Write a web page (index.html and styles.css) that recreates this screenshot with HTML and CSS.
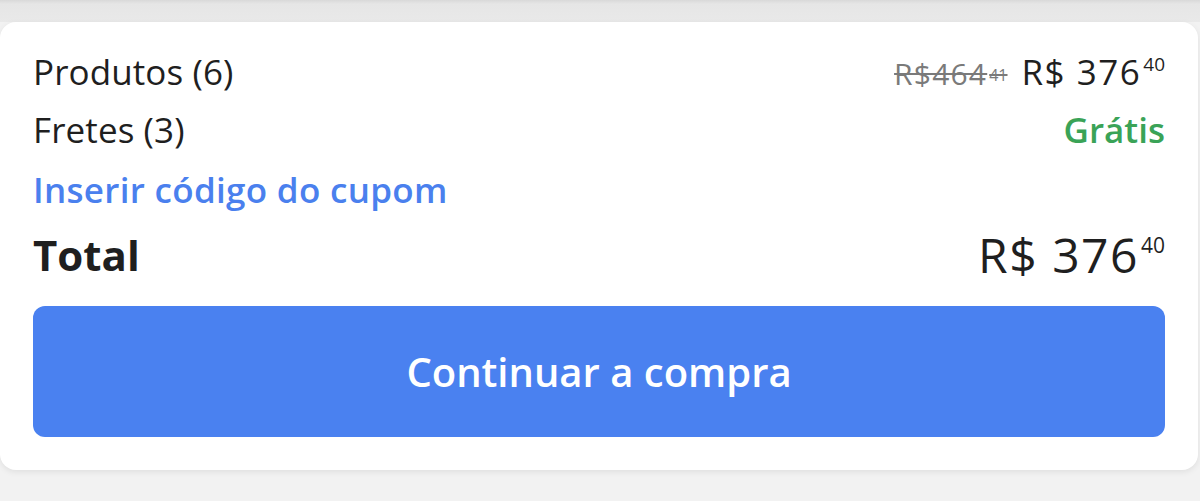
FILE: index.html
```html
<!DOCTYPE html>
<html lang="pt-BR">
<head>
<meta charset="utf-8">
<link rel="stylesheet" href="styles.css">
</head>
<body>
<div class="topbar"></div>
<div class="card">
  <div class="row row-products">
    <span class="label">Produtos (6)</span>
    <span class="prices">
      <span class="old"><span class="old-main">R$464</span><span class="old-cents">41</span></span>
      <span class="price">R$ 376<sup class="cents">40</sup></span>
    </span>
  </div>
  <div class="row row-shipping">
    <span class="label">Fretes (3)</span>
    <span class="free">Grátis</span>
  </div>
  <div class="row row-coupon">
    <a class="coupon">Inserir código do cupom</a>
  </div>
  <div class="row row-total">
    <span class="total-label">Total</span>
    <span class="total-price">R$ 376<sup class="total-cents">40</sup></span>
  </div>
  <button class="cta">Continuar a compra</button>
</div>
</body>
</html>
```
FILE: styles.css
```css
* { box-sizing: border-box; }
html, body { margin: 0; padding: 0; }
body {
  width: 1200px;
  height: 501px;
  background: #f2f2f2;
  font-family: "Open Sans", "Liberation Sans", sans-serif;
  color: #1f1f1f;
  overflow: hidden;
}
.topbar {
  height: 22px;
  background: linear-gradient(#d9d9d9 0, #e6e6e6 4px, #e9e9e9 100%);
}
.card {
  width: 1198px;
  height: 448px;
  background: #fff;
  border-radius: 16px;
  box-shadow: 0 2px 6px rgba(0,0,0,0.08);
  padding: 0 33px 0 33px;
  display: flex;
  flex-direction: column;
}
.row {
  display: flex;
  justify-content: space-between;
  align-items: center;
}
.row-products { height: 58px; margin-top: 20px; }
.row-shipping { height: 58px; }
.row-coupon { height: 62px; }
.row-total { height: 68px; }
.label { font-size: 35px; letter-spacing: 0.1px; }
.prices { display: flex; align-items: baseline; gap: 14px; }
.old { color: #7a7a7a; }
.old-main {
  font-size: 30px;
  letter-spacing: 1.2px;
  text-decoration: line-through;
  text-decoration-thickness: 2px;
}
.old-cents {
  display: inline-block;
  font-size: 16px;
  margin-left: 2px;
  vertical-align: 4px;
  text-decoration: line-through;
  text-decoration-thickness: 1.5px;
}
.price { font-size: 35px; letter-spacing: 1.5px; }
.cents { font-size: 19px; vertical-align: 14px; margin-left: 2px; letter-spacing: 0; }
.total-cents { font-size: 21px; vertical-align: 20px; margin-left: 2px; letter-spacing: 0; }
.free { font-size: 35px; font-weight: 600; color: #3aa357; }
.coupon { font-size: 35px; font-weight: 600; color: #4a80ee; letter-spacing: 0.3px; }
.total-label { font-size: 42px; font-weight: 700; }
.total-price { font-size: 48px; letter-spacing: 1.5px; }
.cta {
  margin-top: 18px;
  height: 131px;
  border: none;
  border-radius: 12px;
  background: #4a81f0;
  color: #fff;
  font-family: inherit;
  font-size: 40px;
  font-weight: 600;
  width: 100%;
}
```
